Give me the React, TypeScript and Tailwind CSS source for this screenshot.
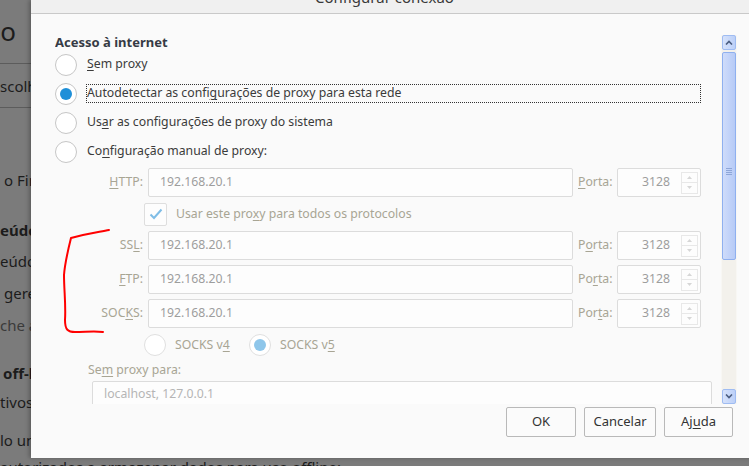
import React from 'react';

const font = "font-['Noto_Sans',sans-serif]";

const Radio = ({ checked = false, disabled = false }: { checked?: boolean; disabled?: boolean }) => (
  <span
    className={`w-[22px] h-[22px] rounded-full border bg-white flex items-center justify-center shrink-0 ${
      disabled ? 'border-[#e0e0e0]' : 'border-[#c6c6c6]'
    }`}
  >
    {checked && (
      <span className={`w-[12px] h-[12px] rounded-full ${disabled ? 'bg-[#8ec6ea]' : 'bg-[#1e8fd8]'}`} />
    )}
  </span>
);

const Spinner = () => (
  <div className="w-[17px] h-[22px] mr-[2px] flex flex-col">
    <div className="h-[11px] border border-[#e8e8e8] flex items-center justify-center">
      <svg width="5" height="3" viewBox="0 0 5 3"><path d="M0 3 L2.5 0 L5 3 Z" fill="#d6d6d6" /></svg>
    </div>
    <div className="h-[11px] border border-t-0 border-[#e8e8e8] flex items-center justify-center">
      <svg width="5" height="3" viewBox="0 0 5 3"><path d="M0 0 L2.5 3 L5 0 Z" fill="#d6d6d6" /></svg>
    </div>
  </div>
);

const ProxyRow = ({ label, port, className = '' }: { label: React.ReactNode; port: React.ReactNode; className?: string }) => (
  <div className={`h-[29px] flex items-center ${className}`}>
    <span className="w-[88px] text-right text-[#a8a594]">{label}</span>
    <div className="ml-[5px] w-[425px] h-[29px] border border-[#dcdcdc] bg-[#fdfdfd] rounded-[2px] flex items-center pl-[11px] text-[#9d9d9d]">
      192.168.20.1
    </div>
    <span className="ml-[5px] w-[39px] text-[#a8a594]">{port}</span>
    <div className="w-[84px] h-[29px] border border-[#dcdcdc] bg-[#fdfdfd] rounded-[2px] flex items-center">
      <span className="flex-1 text-right pr-[11px] text-[#9d9d9d]">3128</span>
      <Spinner />
    </div>
  </div>
);

const BgLine = ({ children, className = '' }: { children: React.ReactNode; className?: string }) => (
  <div className={`whitespace-nowrap text-[15px] text-[#1c1c1c] ${className}`}>{children}</div>
);

export default function App() {
  return (
    <div className={`relative w-[749px] h-[466px] overflow-hidden bg-[#7b7b7b] ${font}`}>
      {/* page behind the dialog */}
      <div className="flex flex-col">
        <div className="h-[63px] flex items-start pt-[14px]">
          <div className="w-[16px] flex justify-end">
            <span className="whitespace-nowrap text-[26px] leading-[34px] text-[#1c1c1c]">Avançado</span>
          </div>
        </div>
        <div className="h-[45px] border-t border-b border-[#5c5c5c] flex items-center">
          <BgLine className="leading-[20px]">scolha como o Firefox se conecta</BgLine>
        </div>
        <BgLine className="mt-[62px] pl-[4px] leading-[20px]">o Firefox se conecta à internet</BgLine>
        <BgLine className="mt-[30px] font-bold leading-[20px]">eúdo web em cache</BgLine>
        <BgLine className="mt-[11px] leading-[20px]">eúdo web está usando</BgLine>
        <BgLine className="mt-[12px] pl-[4px] leading-[20px]">gerenciamento automático de cache</BgLine>
        <BgLine className="mt-[12px] leading-[20px] text-[#3a3a3a]">che a</BgLine>
        <BgLine className="mt-[28px] pl-[3px] font-bold leading-[20px]">off-line e dados de usuário</BgLine>
        <BgLine className="mt-[9px] leading-[20px]">tivos</BgLine>
        <BgLine className="mt-[18px] leading-[20px]">lo um site solicitar</BgLine>
        <BgLine className="mt-[7px] leading-[20px]">autorizados a armazenar dados para uso offline:</BgLine>
      </div>

      {/* dialog */}
      <div className="absolute left-[31px] top-0 w-[738px] h-[458px] bg-[#fafafa] shadow-[-2px_0_4px_rgba(0,0,0,0.25)] text-[12.25px] text-[#3b3b3b] flex flex-col">
        <div className="h-[14px] shrink-0 bg-[#f0f0f0] border-b border-[#c9c9c9] flex items-end overflow-hidden">
          <span className="ml-[284px] mb-[6px] text-[15px] leading-[20px] text-[#3a3a3a] whitespace-nowrap">Configurar conexão</span>
          <span className="ml-auto mr-[20px] mb-[8px] text-[16px] leading-[20px] text-[#777]">×</span>
        </div>

        <div className="flex pt-[21px] pl-[24px]">
          <div className="w-[666px] h-[369px] overflow-hidden">
            <div className="h-[15px] text-[13px] leading-[15px] font-bold text-[#363b45]">Acesso à internet</div>
            <div className="h-[29px] flex items-center gap-[10px]">
              <Radio />
              <span><u className="underline-offset-2">S</u>em proxy</span>
            </div>
            <div className="h-[29px] flex items-center gap-[9px]">
              <Radio checked />
              <span className="w-[615px] h-[19px] border border-dotted border-[#333] flex items-center">
                Autodetectar as confi<u className="underline-offset-2">g</u>urações de proxy para esta rede
              </span>
            </div>
            <div className="h-[29px] flex items-center gap-[10px]">
              <Radio />
              <span>Us<u className="underline-offset-2">a</u>r as configurações de proxy do sistema</span>
            </div>
            <div className="h-[29px] flex items-center gap-[10px]">
              <Radio />
              <span>Co<u className="underline-offset-2">n</u>figuração manual de proxy:</span>
            </div>

            <ProxyRow className="mt-[2px]" label={<><u className="underline-offset-2">H</u>TTP:</>} port={<><u className="underline-offset-2">P</u>orta:</>} />
            <div className="h-[34px] flex items-center pl-[89px]">
              <span className="w-[23px] h-[23px] border border-[#dedede] bg-[#fdfdfd] rounded-[2px] flex items-center justify-center">
                <svg width="14" height="12" viewBox="0 0 14 12">
                  <path d="M1.5 6.5 L5 10 L12.5 1.5" fill="none" stroke="#7fbde6" strokeWidth="2" />
                </svg>
              </span>
              <span className="ml-[9px] text-[#a8a594]">Usar este pro<u className="underline-offset-2">x</u>y para todos os protocolos</span>
            </div>
            <ProxyRow label={<>SS<u className="underline-offset-2">L</u>:</>} port={<>P<u className="underline-offset-2">o</u>rta:</>} />
            <ProxyRow className="mt-[5px]" label={<><u className="underline-offset-2">F</u>TP:</>} port={<>Po<u className="underline-offset-2">r</u>ta:</>} />
            <ProxyRow className="mt-[5px]" label={<>SOC<u className="underline-offset-2">K</u>S:</>} port={<>Por<u className="underline-offset-2">t</u>a:</>} />

            <div className="h-[34px] flex items-center pl-[89px] text-[#a8a594]">
              <div className="w-[105px] flex items-center gap-[9px]">
                <Radio disabled />
                <span>SOCKS v<u className="underline-offset-2">4</u></span>
              </div>
              <div className="flex items-center gap-[9px]">
                <Radio checked disabled />
                <span>SOCKS v<u className="underline-offset-2">5</u></span>
              </div>
            </div>
            <div className="h-[16px] leading-[16px] pl-[33px] text-[#a8a594]">
              Se<u className="underline-offset-2">m</u> proxy para:
            </div>
            <div className="mt-[3px] ml-[37px] w-[620px] h-[40px] border border-[#dcdcdc] bg-[#fdfdfd] rounded-[2px] pl-[11px] pt-[3px] text-[#b5b5b5]">
              localhost, 127.0.0.1
            </div>
          </div>

          {/* scrollbar */}
          <div className="w-[16px] h-[369px] flex flex-col bg-[#f3f1ec] border-x border-[#f8f7f4]">
            <div className="h-[15px] rounded-[2px] border border-[#9fbcf2] bg-gradient-to-r from-[#d6e2fb] to-[#bcd0f8] flex items-center justify-center">
              <svg width="8" height="5" viewBox="0 0 8 5"><path d="M1 4.5 L4 1.5 L7 4.5" fill="none" stroke="#4b5d80" strokeWidth="1.6" /></svg>
            </div>
            <div className="mt-[2px] h-[208px] rounded-[2px] border border-[#8fb0ef] bg-gradient-to-r from-[#cfdcfa] via-[#c2d3f9] to-[#b7cbf6] flex items-center justify-center">
              <div className="flex flex-col gap-[1px] mt-[30px]">
                <span className="w-[6px] h-[1px] bg-[#8ea6d8]" />
                <span className="w-[6px] h-[1px] bg-[#8ea6d8]" />
                <span className="w-[6px] h-[1px] bg-[#8ea6d8]" />
                <span className="w-[6px] h-[1px] bg-[#8ea6d8]" />
              </div>
            </div>
            <div className="flex-1" />
            <div className="h-[15px] rounded-[2px] border border-[#9fbcf2] bg-gradient-to-r from-[#d6e2fb] to-[#bcd0f8] flex items-center justify-center">
              <svg width="8" height="5" viewBox="0 0 8 5"><path d="M1 0.5 L4 3.5 L7 0.5" fill="none" stroke="#4b5d80" strokeWidth="1.6" /></svg>
            </div>
          </div>
        </div>

        <div className="mt-[3px] flex pl-[475px] gap-[8px] text-[13px] text-[#333]">
          <button className="w-[70px] h-[30px] border border-[#b9b9b9] rounded-[2px] bg-[#fbfbfb]">OK</button>
          <button className="w-[72px] h-[30px] border border-[#b9b9b9] rounded-[2px] bg-[#fbfbfb]">Cancelar</button>
          <button className="w-[69px] h-[30px] border border-[#b9b9b9] rounded-[2px] bg-[#fbfbfb]">
            Aj<u className="underline-offset-2">u</u>da
          </button>
        </div>
      </div>

      {/* red annotation drawn on the screenshot */}
      <svg className="absolute left-0 top-0 pointer-events-none" width="749" height="466">
        <path
          d="M109 230 C 100 232, 90 233, 71 238 C 68 250, 65 262, 64 275 C 64 290, 66 305, 65 320 C 65 330, 68 332, 75 332 C 85 332, 95 331, 103 332"
          fill="none"
          stroke="#ff0000"
          strokeWidth="2"
          strokeLinecap="round"
        />
      </svg>
    </div>
  );
}
